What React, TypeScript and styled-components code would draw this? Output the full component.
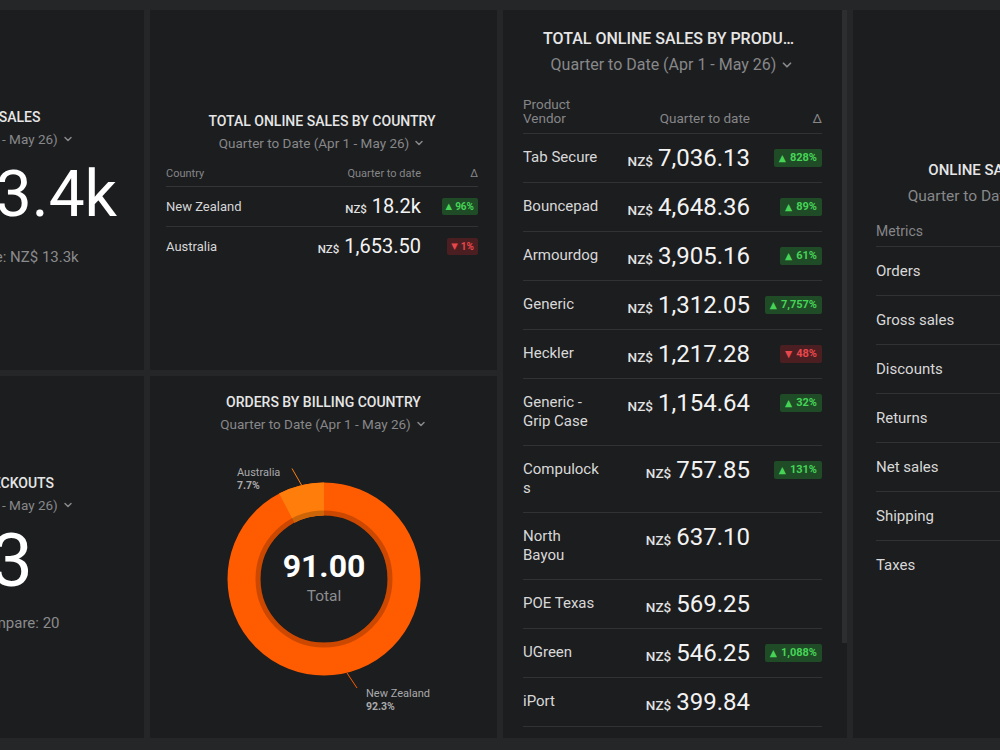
import React from 'react'
import styled, { createGlobalStyle } from 'styled-components'
import { ChevronDown } from 'lucide-react'

const GlobalStyle = createGlobalStyle`
  html, body {
    margin: 0;
    padding: 0;
    background: #252628;
    overflow: hidden;
  }
  body {
    font-family: Roboto, "Liberation Sans", sans-serif;
  }
`

type Change = { dir: 'up' | 'down'; pct: string }

const countries: { name: string; value: string; change: Change }[] = [
  { name: 'New Zealand', value: '18.2k', change: { dir: 'up', pct: '96%' } },
  { name: 'Australia', value: '1,653.50', change: { dir: 'down', pct: '1%' } },
]

const vendors: { name: string; value: string; change?: Change }[] = [
  { name: 'Tab Secure', value: '7,036.13', change: { dir: 'up', pct: '828%' } },
  { name: 'Bouncepad', value: '4,648.36', change: { dir: 'up', pct: '89%' } },
  { name: 'Armourdog', value: '3,905.16', change: { dir: 'up', pct: '61%' } },
  { name: 'Generic', value: '1,312.05', change: { dir: 'up', pct: '7,757%' } },
  { name: 'Heckler', value: '1,217.28', change: { dir: 'down', pct: '48%' } },
  { name: 'Generic - Grip Case', value: '1,154.64', change: { dir: 'up', pct: '32%' } },
  { name: 'Compulocks', value: '757.85', change: { dir: 'up', pct: '131%' } },
  { name: 'North Bayou', value: '637.10' },
  { name: 'POE Texas', value: '569.25' },
  { name: 'UGreen', value: '546.25', change: { dir: 'up', pct: '1,088%' } },
  { name: 'iPort', value: '399.84' },
]

const metrics = ['Orders', 'Gross sales', 'Discounts', 'Returns', 'Net sales', 'Shipping', 'Taxes']

const Period: React.FC<{ size?: number }> = ({ size = 13.5 }) => (
  <PeriodLine $size={size}>
    Quarter to Date (Apr 1 - May 26)
    <ChevronDown size={Math.round(size) - 2} strokeWidth={3} />
  </PeriodLine>
)

const Delta: React.FC<{ change?: Change; size: number }> = ({ change, size }) =>
  change ? (
    <Badge $down={change.dir === 'down'} $size={size}>
      <Arrow>{change.dir === 'up' ? '▲' : '▼'}</Arrow>
      {change.pct}
    </Badge>
  ) : null

const Donut: React.FC = () => {
  const r = 80
  const c = 2 * Math.PI * r
  const au = 0.077
  return (
    <svg width="300" height="272" viewBox="0 0 300 272">
      <g transform="translate(150 135) rotate(-90)">
        <circle r={r} fill="none" stroke="#ff5b00" strokeWidth="33" />
        <circle
          r={r}
          fill="none"
          stroke="#ff7d0a"
          strokeWidth="33"
          strokeDasharray={`${c * au} ${c}`}
          transform={`rotate(${-360 * au})`}
        />
        <circle r="66" fill="none" stroke="rgba(0,0,0,0.2)" strokeWidth="5" />
      </g>
      <line x1="118" y1="24.5" x2="127.5" y2="41" stroke="#ff7d0a" strokeWidth="1" />
      <line x1="173" y1="229" x2="183" y2="244" stroke="#ff5b00" strokeWidth="1" />
      <text x="63" y="31.5" fill="#a9aaac" fontSize="11" fontFamily="Roboto">Australia</text>
      <text x="63" y="44.5" fill="#a9aaac" fontSize="10.5" fontWeight="700" fontFamily="Roboto">7.7%</text>
      <text x="192" y="252.5" fill="#a9aaac" fontSize="11" fontFamily="Roboto">New Zealand</text>
      <text x="192" y="265.5" fill="#a9aaac" fontSize="10.5" fontWeight="700" fontFamily="Roboto">92.3%</text>
      <text x="150" y="133" textAnchor="middle" fill="#ffffff" fontSize="32" fontWeight="700" fontFamily="Roboto">91.00</text>
      <text x="150" y="157" textAnchor="middle" fill="#8d8e90" fontSize="15.5" fontFamily="Roboto">Total</text>
    </svg>
  )
}

export default function App() {
  return (
    <>
      <GlobalStyle />
      <Board>
        <Card $col={1} $row="1" $pad="0 16px 7px">
          <Title>Total Online Sales</Title>
          <Period />
          <BigValue $size={64}>NZ$ 23.4k</BigValue>
          <Compare>Prior period compare: NZ$ 13.3k</Compare>
        </Card>

        <Card $col={2} $row="1" $pad="0 19px 4px 16px">
          <Title>Total Online Sales by Country</Title>
          <Period />
          <CountryTable>
            <CountryHead>
              <span>Country</span>
              <RightCell>Quarter to date</RightCell>
              <RightCell>Δ</RightCell>
            </CountryHead>
            {countries.map((c) => (
              <CountryRow key={c.name}>
                <CountryName>{c.name}</CountryName>
                <ValueCell>
                  <Cur $size={11.5}>NZ$</Cur>
                  <Amount $size={20}>{c.value}</Amount>
                </ValueCell>
                <RightCell>
                  <Delta change={c.change} size={10} />
                </RightCell>
              </CountryRow>
            ))}
          </CountryTable>
        </Card>

        <Card $col={3} $row="1 / span 2" $align="flex-start" $pad="19px 25px 0 20px">
          <Scrollbar />
          <Title $size={16} $clip>Total Online Sales by Product Vendor</Title>
          <Period size={16} />
          <VendorTable>
            <VendorHead>
              <HeadName>Product Vendor</HeadName>
              <RightCell>Quarter to date</RightCell>
              <RightCell>Δ</RightCell>
            </VendorHead>
            {vendors.map((v) => (
              <VendorRow key={v.name}>
                <VendorName>{v.name}</VendorName>
                <ValueCell>
                  <Cur $size={13.5}>NZ$</Cur>
                  <Amount $size={24}>{v.value}</Amount>
                </ValueCell>
                <RightCell>
                  <Delta change={v.change} size={11} />
                </RightCell>
              </VendorRow>
            ))}
          </VendorTable>
        </Card>

        <Card $col={4} $row="1 / span 2" $pad="0 24px 0 23px">
          <Title $size={15}>Online Sales Breakdown</Title>
          <Period size={15.5} />
          <MetricTable>
            <MetricHead>Metrics</MetricHead>
            {metrics.map((m) => (
              <MetricRow key={m}>{m}</MetricRow>
            ))}
          </MetricTable>
        </Card>

        <Card $col={1} $row="2" $pad="0 16px 9px">
          <Title>Abandoned Checkouts</Title>
          <Period />
          <BigValue $size={74}>123</BigValue>
          <Compare>Previous time compare: 20</Compare>
        </Card>

        <Card $col={2} $row="2" $align="flex-start" $pad="16px 16px 0">
          <Title>Orders by Billing Country</Title>
          <Period />
          <ChartWrap>
            <Donut />
          </ChartWrap>
        </Card>
      </Board>
    </>
  )
}

const Board = styled.div`
  display: grid;
  grid-template-columns: 347px 347px 344px 347px;
  grid-template-rows: 360px 362px;
  gap: 6px;
  padding-top: 10px;
  margin-left: -203px;
  width: max-content;
`

const Card = styled.section<{ $col: number; $row: string; $align?: string; $pad?: string }>`
  grid-column: ${(p) => p.$col};
  grid-row: ${(p) => p.$row};
  position: relative;
  box-sizing: border-box;
  display: flex;
  flex-direction: column;
  justify-content: ${(p) => p.$align ?? 'center'};
  padding: ${(p) => p.$pad ?? '0 16px'};
  background: #1c1d1f;
  overflow: hidden;

  & > * {
    flex-shrink: 0;
  }
`

const Scrollbar = styled.div`
  position: absolute;
  top: 0;
  right: 0;
  width: 5px;
  height: 633px;
  background: #2d2e30;
`

const Title = styled.h2<{ $size?: number; $clip?: boolean }>`
  margin: 0;
  padding: ${(p) => (p.$clip ? '0 20px' : '0')};
  font-size: ${(p) => p.$size ?? 14}px;
  font-weight: 500;
  line-height: 20px;
  color: #e6e6e6;
  text-align: center;
  text-transform: uppercase;
  white-space: nowrap;
  overflow: hidden;
  text-overflow: ellipsis;
`

const PeriodLine = styled.div<{ $size: number }>`
  display: flex;
  justify-content: center;
  align-items: center;
  gap: 4px;
  margin-top: ${(p) => (p.$size > 14 ? 6 : 2)}px;
  font-size: ${(p) => p.$size}px;
  line-height: 20px;
  color: #87888a;
  white-space: nowrap;
`

const BigValue = styled.div<{ $size: number }>`
  margin-top: 8px;
  font-size: ${(p) => p.$size}px;
  line-height: 76px;
  color: #ffffff;
  text-align: center;
  white-space: nowrap;
`

const Compare = styled.div`
  margin-top: 14px;
  font-size: 15px;
  line-height: 20px;
  color: #8a8b8d;
  text-align: center;
  white-space: nowrap;
`

const RightCell = styled.div`
  display: flex;
  justify-content: flex-end;
  align-items: center;
  white-space: nowrap;
`

const ValueCell = styled.div`
  display: flex;
  justify-content: flex-end;
  align-items: baseline;
  height: 20px;
  line-height: 20px;
  white-space: nowrap;
`

const CountryTable = styled.div`
  margin-top: 14px;
`

const CountryHead = styled.div`
  display: grid;
  grid-template-columns: 1fr auto 57px;
  padding-bottom: 5px;
  border-bottom: 1px solid #343537;
  font-size: 11px;
  line-height: 14px;
  color: #858688;
`

const CountryRow = styled.div`
  display: grid;
  grid-template-columns: 1fr auto 57px;
  align-items: center;
  height: 39px;

  & + & {
    border-top: 1px solid #313234;
  }
`

const CountryName = styled.span`
  font-size: 13px;
  color: #d6d6d6;
`

const Cur = styled.span<{ $size: number }>`
  margin-right: 5px;
  font-size: ${(p) => p.$size}px;
  font-weight: 500;
  color: #e2e2e2;
`

const Amount = styled.span<{ $size: number }>`
  font-size: ${(p) => p.$size}px;
  color: #f3f3f3;
`

const Badge = styled.span<{ $down?: boolean; $size: number }>`
  display: inline-flex;
  align-items: center;
  gap: ${(p) => (p.$size > 10 ? 4 : 3)}px;
  padding: 2px ${(p) => (p.$size > 10 ? 5 : 4)}px;
  border-radius: 2px;
  font-size: ${(p) => p.$size}px;
  font-weight: 700;
  line-height: ${(p) => p.$size + 3}px;
  background: ${(p) => (p.$down ? '#4b1f21' : '#1f4b26')};
  color: ${(p) => (p.$down ? '#e8474c' : '#46d457')};
`

const Arrow = styled.span`
  font-family: "DejaVu Sans", sans-serif;
  font-size: 0.85em;
`

const VendorTable = styled.div`
  margin-top: 22px;
`

const VendorHead = styled.div`
  display: grid;
  grid-template-columns: 80px 1fr 72px;
  align-items: end;
  padding-bottom: 8px;
  border-bottom: 1px solid #313234;
  font-size: 13.5px;
  line-height: 14px;
  color: #858688;
`

const HeadName = styled.span`
  width: 60px;
`

const VendorRow = styled.div`
  display: grid;
  grid-template-columns: 80px 1fr 72px;
  align-items: start;
  padding: 14px 0;
  line-height: 20px;
  border-bottom: 1px solid #313234;

  & > ${RightCell} {
    height: 20px;
  }
`

const VendorName = styled.span`
  font-size: 15px;
  line-height: 19px;
  color: #d8d8d8;
  overflow-wrap: anywhere;
`

const MetricTable = styled.div`
  margin-top: 18px;
`

const MetricHead = styled.div`
  padding-bottom: 8px;
  font-size: 14px;
  line-height: 14px;
  color: #858688;
`

const MetricRow = styled.div`
  height: 48px;
  display: flex;
  align-items: center;
  border-top: 1px solid #313234;
  font-size: 15px;
  color: #d8d8d8;
`

const ChartWrap = styled.div`
  display: flex;
  justify-content: center;
  margin-top: 10px;
`
